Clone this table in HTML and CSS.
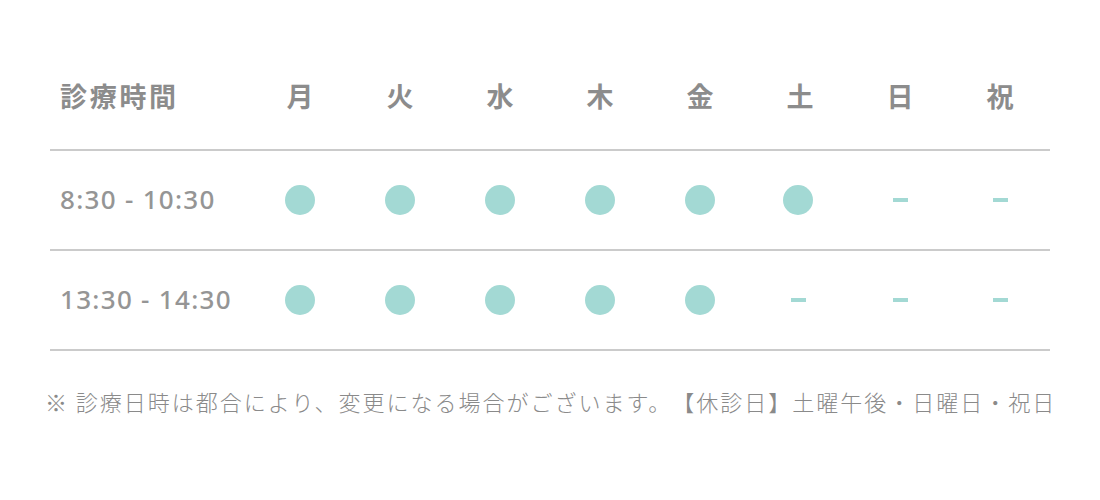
FILE: index.html
```html
<!DOCTYPE html>
<html lang="ja">
  <head>
    <meta charset="UTF-8" />
    <title>診療時間</title>
    <link rel="stylesheet" href="styles.css">
  </head>
  <body>
    <main class="hours">
      <div class="hours-row hours-head">
        <div class="label">診療時間</div>
        <div class="day">月</div>
        <div class="day">火</div>
        <div class="day">水</div>
        <div class="day">木</div>
        <div class="day">金</div>
        <div class="day">土</div>
        <div class="day">日</div>
        <div class="day">祝</div>
      </div>
      <div class="hours-row">
        <div class="time">8:30 - 10:30</div>
        <div class="day"><span class="open"></span></div>
        <div class="day"><span class="open"></span></div>
        <div class="day"><span class="open"></span></div>
        <div class="day"><span class="open"></span></div>
        <div class="day"><span class="open"></span></div>
        <div class="day sat"><span class="open"></span></div>
        <div class="day"><span class="closed"></span></div>
        <div class="day"><span class="closed"></span></div>
      </div>
      <div class="hours-row">
        <div class="time">13:30 - 14:30</div>
        <div class="day"><span class="open"></span></div>
        <div class="day"><span class="open"></span></div>
        <div class="day"><span class="open"></span></div>
        <div class="day"><span class="open"></span></div>
        <div class="day"><span class="open"></span></div>
        <div class="day sat"><span class="closed"></span></div>
        <div class="day"><span class="closed"></span></div>
        <div class="day"><span class="closed"></span></div>
      </div>
      <p class="note">※ 診療日時は都合により、変更になる場合がございます。【休診日】土曜午後・日曜日・祝日</p>
    </main>
  </body>
</html>
```

FILE: styles.css
```css
body {
  margin: 0;
  background: #fff;
  font-family: "Noto Sans CJK JP", "Noto Sans", sans-serif;
  color: #8c8c8c;
}
.hours {
  width: 1000px;
  margin: 50px auto 0;
}
.hours-row {
  display: grid;
  grid-template-columns: 200px repeat(8, 100px);
  align-items: center;
  height: 100px;
  border-bottom: 2px solid #cbcbcb;
  box-sizing: border-box;
}
.hours-head {
  height: 101px;
}
.label {
  padding-left: 10px;
  font-size: 27px;
  font-weight: bold;
  letter-spacing: 0.1em;
  padding-bottom: 8px;
}
.hours-head .day {
  font-size: 27px;
  font-weight: bold;
  padding-bottom: 8px;
}
.day {
  display: flex;
  justify-content: center;
  align-items: center;
}
.time {
  padding-left: 10px;
  padding-bottom: 2px;
  font-family: "Noto Sans", sans-serif;
  font-size: 26px;
  font-weight: 500;
  letter-spacing: 1.3px;
  color: #959595;
}
.open {
  width: 30px;
  height: 30px;
  border-radius: 50%;
  background: #a3d9d4;
}
.closed {
  width: 15px;
  height: 4px;
  background: #a3d9d4;
}
.sat {
  transform: translateX(-2px);
}
.note {
  margin: 34px 0 0 -5px;
  font-size: 22px;
  font-weight: 300;
  letter-spacing: 2px;
  white-space: nowrap;
  text-spacing-trim: space-all;
  color: #8a8a8a;
}
```
